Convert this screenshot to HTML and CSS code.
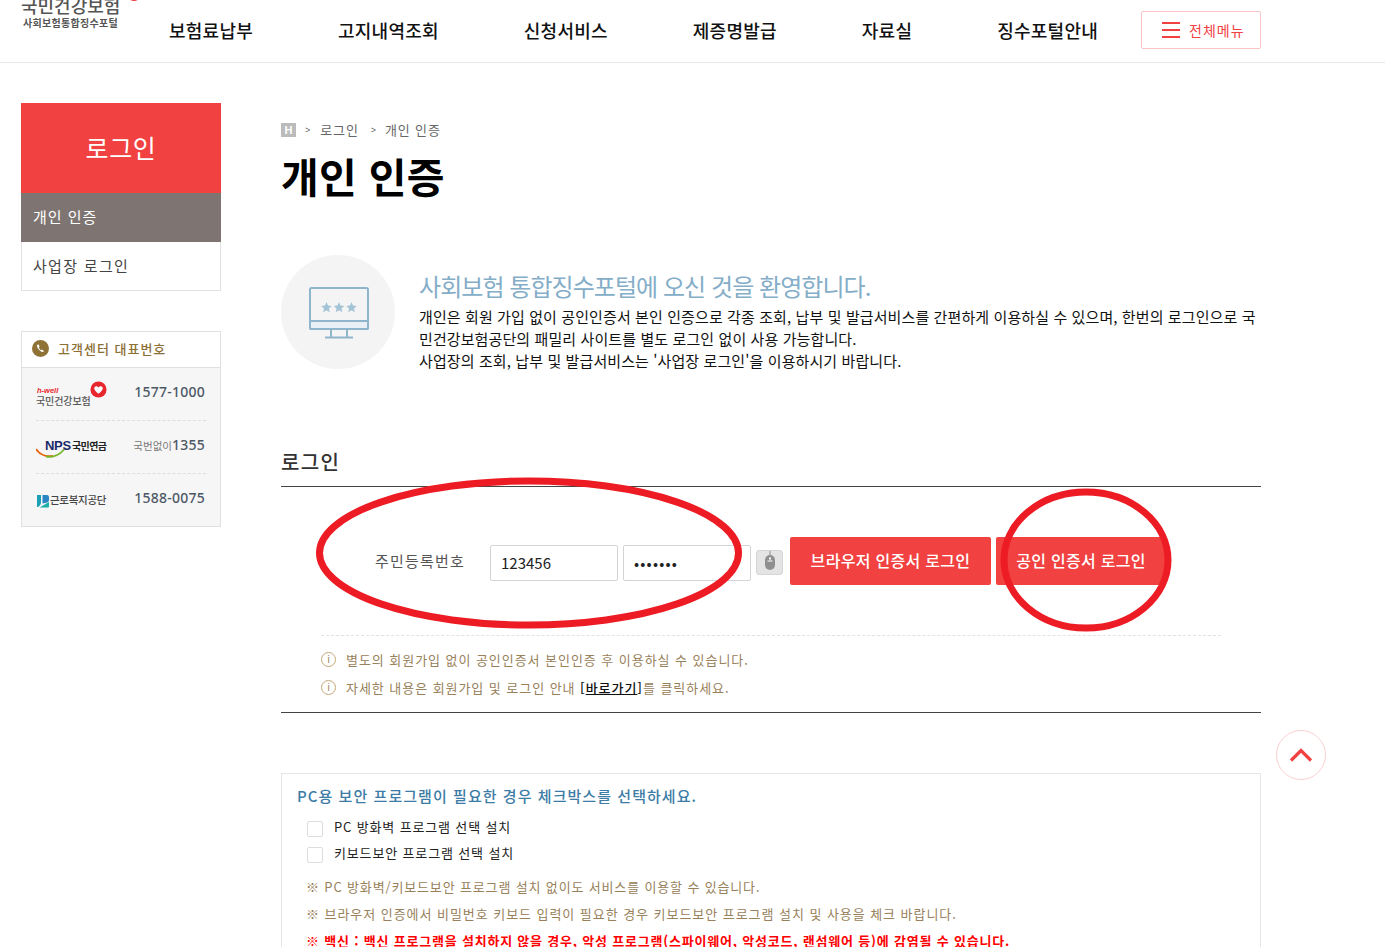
FILE: index.html
```html
<!DOCTYPE html>
<html lang="ko">
<head>
<meta charset="utf-8">
<title>개인 인증</title>
<link rel="stylesheet" href="styles.css">
</head>
<body>
<header class="header">
  <a class="logo">
    <span class="logo-main">국민건강보험</span>
    <span class="logo-sub">사회보험통합징수포털</span>
    <span class="logo-dot"></span>
  </a>
  <nav class="nav">
    <a>보험료납부</a><a>고지내역조회</a><a>신청서비스</a><a>제증명발급</a><a>자료실</a><a>징수포털안내</a>
  </nav>
  <button class="all-menu"><span class="burger"><i></i><i></i><i></i></span>전체메뉴</button>
</header>
<div class="page">
  <aside class="side">
    <h2 class="side-title">로그인</h2>
    <ul class="side-menu">
      <li class="on">개인 인증</li>
      <li>사업장 로그인</li>
    </ul>
    <section class="call">
      <h3 class="call-head">
        <svg class="call-icon" width="17" height="17" viewBox="0 0 17 17"><circle cx="8.5" cy="8.5" r="8.5" fill="#8f7336"/><path d="M5.6 4.6c-.9.7-.7 2.4.6 4.2 1.400 1.900 3 3.200 4.300 3.200.8 0 1.300-.5 1.300-1l-2-1.500-.9.700C8 9.700 7.200 8.600 6.800 7.500l.8-.8-1-2.200z" fill="#fff"/></svg>
        고객센터 대표번호
      </h3>
      <div class="call-row">
        <span class="org org-nhis">
          <em>h-well</em><b>국민건강보험</b>
          <svg class="heart" width="17" height="17" viewBox="0 0 18 18"><circle cx="9" cy="9" r="8.500" fill="#e8262d"/><path d="M9 13.500C6 11.200 4.500 9.700 4.500 7.800 4.500 6.400 5.500 5.500 6.700 5.500c1 0 1.800.6 2.300 1.400.5-.8 1.300-1.400 2.300-1.400 1.200 0 2.200.9 2.200 2.300 0 1.900-1.500 3.400-4.500 5.700z" fill="#fff"/></svg>
        </span>
        <span class="tel">1577-1000</span>
      </div>
      <div class="call-row">
        <span class="org org-nps">
          <svg class="swoosh" width="29" height="10" viewBox="0 0 29 10"><path d="M0 1c4 6 11 8 17 7" fill="none" stroke="#e8650f" stroke-width="2"/><path d="M10 8.500c7 1 14-2 18-7" fill="none" stroke="#7ab52c" stroke-width="2"/></svg>
          <b class="nps">NPS</b><b class="nps-name">국민연금</b>
        </span>
        <span class="tel"><small>국번없이</small>1355</span>
      </div>
      <div class="call-row">
        <span class="org org-kcomwel">
          <svg width="13" height="14" viewBox="0 0 13 14"><path d="M1 1h4v7c0 2-1 4-3 5H1z" fill="#1b9fb5"/><path d="M6.500 1H11c1.500 0 2 1 2 2.500V6c0 2-2 3-4 3l-2.500.5z" fill="#2a86c4"/><path d="M3.500 13.500L13 8v4c0 1-.5 1.500-1.500 1.500z" fill="#1bb0a8"/></svg>
          <b>근로복지공단</b>
        </span>
        <span class="tel">1588-0075</span>
      </div>
    </section>
  </aside>
  <main class="main">
    <div class="crumb">
      <span class="crumb-home">H</span>
      <span class="crumb-sep">&gt;</span><span>로그인</span>
      <span class="crumb-sep crumb-sep2">&gt;</span><span>개인 인증</span>
    </div>
    <h1 class="title">개인 인증</h1>
    <section class="intro">
      <div class="intro-icon">
        <svg width="60" height="52" viewBox="0 0 60 52">
          <rect x="1" y="1" width="58" height="41" rx="1.500" fill="none" stroke="#8fb5cd" stroke-width="2"/>
          <path d="M1 34h58v7a1 1 0 0 1-1 1H2a1 1 0 0 1-1-1z" fill="#e8eff5" stroke="#8fb5cd" stroke-width="2"/>
          <path d="M22 42v8M38 42v8M16 50.500h28" fill="none" stroke="#8fb5cd" stroke-width="2"/>
          <path d="M17.500 15l1.500 3.600 3.800.3-2.900 2.500.9 3.800-3.300-2-3.300 2 .9-3.800-2.900-2.500 3.800-.3z" fill="#a3c3d7"/>
          <path d="M30 15l1.500 3.600 3.800.3-2.900 2.500.9 3.800-3.300-2-3.300 2 .9-3.800-2.900-2.500 3.800-.3z" fill="#a3c3d7"/>
          <path d="M42.500 15l1.500 3.600 3.800.3-2.900 2.500.9 3.800-3.300-2-3.300 2 .9-3.800-2.900-2.500 3.800-.3z" fill="#a3c3d7"/>
        </svg>
      </div>
      <div class="intro-text">
        <h2>사회보험 통합징수포털에 오신 것을 환영합니다.</h2>
        <p>개인은 회원 가입 없이 공인인증서 본인 인증으로 각종 조회, 납부 및 발급서비스를 간편하게 이용하실 수 있으며, 한번의 로그인으로 국민건강보험공단의 패밀리 사이트를 별도 로그인 없이 사용 가능합니다.<br>사업장의 조회, 납부 및 발급서비스는 '사업장 로그인'을 이용하시기 바랍니다.</p>
      </div>
    </section>
    <h2 class="sec-title">로그인</h2>
    <section class="login">
      <div class="login-row">
        <label class="login-label">주민등록번호</label>
        <input class="field" type="text" value="123456">
        <input class="field field-pw" type="password" value="1234567">
        <span class="mouse-btn">
          <svg width="12" height="20" viewBox="0 0 12 20"><path d="M6 0v4" stroke="#8f8f8f"/><rect x="1" y="4" width="10" height="15" rx="5" fill="#8f8f8f"/><path d="M3.500 10h5" stroke="#fff"/><rect x="5" y="6.500" width="2" height="2" fill="#fff"/></svg>
        </span>
        <button class="login-btn">브라우저 인증서 로그인</button>
        <button class="login-btn login-btn2">공인 인증서 로그인</button>
      </div>
      <ul class="login-notes">
        <li><span class="info">i</span>별도의 회원가입 없이 공인인증서 본인인증 후 이용하실 수 있습니다.</li>
        <li><span class="info">i</span>자세한 내용은 회원가입 및 로그인 안내 <a class="go">[<u>바로가기</u>]</a>를 클릭하세요.</li>
      </ul>
      <svg class="mark mark-ellipse" width="434" height="160" viewBox="0 0 434 160"><ellipse cx="217" cy="80" rx="209.500" ry="72" fill="none" stroke="#ed1c24" stroke-width="7"/></svg>
      <svg class="mark mark-circle" width="178" height="150" viewBox="0 0 178 150"><ellipse cx="89" cy="75" rx="82" ry="68" fill="none" stroke="#ed1c24" stroke-width="7"/></svg>
    </section>
    <section class="secure">
      <h3>PC용 보안 프로그램이 필요한 경우 체크박스를 선택하세요.</h3>
      <label class="check"><input type="checkbox"><span>PC 방화벽 프로그램 선택 설치</span></label>
      <label class="check"><input type="checkbox"><span>키보드보안 프로그램 선택 설치</span></label>
      <p class="note note-first">※ PC 방화벽/키보드보안 프로그램 설치 없이도 서비스를 이용할 수 있습니다.</p>
      <p class="note note-wide">※ 브라우저 인증에서 비밀번호 키보드 입력이 필요한 경우 키보드보안 프로그램 설치 및 사용을 체크 바랍니다.</p>
      <p class="note note-red">※ 백신 : 백신 프로그램을 설치하지 않을 경우, 악성 프로그램(스파이웨어, 악성코드, 랜섬웨어 등)에 감염될 수 있습니다.</p>
    </section>
  </main>
</div>
<a class="to-top"><svg width="24" height="14" viewBox="0 0 24 14"><path d="M2 12.500L12 2.500l10 10" fill="none" stroke="#f24141" stroke-width="3.200"/></svg></a>
</body>
</html>
```
FILE: styles.css
```css
* { box-sizing: border-box; }
html, body { margin: 0; padding: 0; height: 947px; overflow: hidden; background: #fff; }
body { font-family: "Noto Sans CJK KR", "Noto Sans", sans-serif; color: #222; font-size: 14px; position: relative; }
h1, h2, h3, p, ul { margin: 0; padding: 0; font-weight: normal; }
ul { list-style: none; }

.header { height: 63px; border-bottom: 1px solid #e7e7e7; display: flex; align-items: flex-start; position: relative; overflow: hidden; padding-left: 21px; }
.logo { display: flex; flex-direction: column; width: 148px; margin-top: -6px; position: relative; }
.logo-main { font-size: 18px; line-height: 22px; font-weight: 500; color: #555; }
.logo-sub { font-size: 10px; line-height: 13px; font-weight: 700; color: #555; margin-left: 2px; letter-spacing: .3px; white-space: nowrap; }
.logo-dot { position: absolute; left: 105px; top: -11px; width: 16px; height: 18px; border-radius: 50%; background: #ee3b3f; }
.nav { display: flex; gap: 85px; padding-top: 17px; }
.nav a { font-size: 18px; line-height: 26px; color: #111; font-weight: 500; letter-spacing: 0.24px; white-space: nowrap; }
.all-menu { margin: 11px 0 0 43px; width: 120px; height: 38px; border: 1px solid #fbc4c4; border-radius: 2px; background: #fff; color: #f24141; font: 14px "Noto Sans CJK KR", sans-serif; letter-spacing: 1px; display: flex; align-items: center; padding: 0 0 0 20px; gap: 9px; }
.burger { display: flex; flex-direction: column; gap: 5px; width: 18px; }
.burger i { display: block; height: 2px; background: #f24141; }

.page { display: flex; gap: 60px; padding: 40px 0 0 21px; }
.side { width: 200px; flex: none; }
.side-title { height: 90px; background: #f24141; color: #fff; font-size: 25px; line-height: 88px; text-align: center; letter-spacing: .6px; }
.side-menu { border: 1px solid #e2e2e2; border-top: 0; }
.side-menu li { height: 48px; line-height: 48px; padding-left: 11px; font-size: 15px; color: #444; letter-spacing: 1.3px; }
.side-menu li.on { background: #7e7572; color: #fff; margin: 0 -1px; height: 49px; padding-left: 12px; letter-spacing: 1px; }
.call { margin-top: 40px; border: 1px solid #e0e0e0; background: #f6f6f6; height: 196px; }
.call-head { height: 36px; background: #fff; border-bottom: 1px solid #e0e0e0; display: flex; align-items: center; gap: 9px; padding: 0 0 2px 10px; font-size: 13px; color: #8c6f35; font-weight: 500; letter-spacing: 1px; }
.call-row { height: 53px; margin: 0 14px; display: flex; align-items: center; justify-content: space-between; border-bottom: 1px dashed #ddd; }
.call-row:last-child { border-bottom: 0; }
.org { display: flex; align-items: center; position: relative; width: 72px; height: 30px; color: #444; }
.org-nhis b { font-size: 10px; font-weight: 500; color: #555; position: absolute; left: 0; top: 16px; line-height: 12px; white-space: nowrap; letter-spacing: -.1px; }
.org-nhis em { font: italic 700 7.500px/8px "Liberation Sans", sans-serif; color: #e8262d; position: absolute; left: 1px; top: 8px; }
.heart { position: absolute; left: 54px; top: 2px; }
.swoosh { position: absolute; left: 0; top: 16px; }
.nps { font: 700 13px "Liberation Sans", sans-serif; color: #1c2a6b; position: absolute; left: 9px; top: 6px; letter-spacing: -.3px; }
.nps-name { font-size: 10px; font-weight: 700; color: #222; position: absolute; left: 36px; top: 7px; line-height: 13px; white-space: nowrap; letter-spacing: -.6px; }
.org-kcomwel { gap: 1px; }
.org-kcomwel b { font-size: 10.500px; font-weight: 500; color: #444; white-space: nowrap; letter-spacing: -.3px; margin-bottom: 2px; }
.tel { font: 500 14px "Noto Sans", sans-serif; color: #4d5866; white-space: nowrap; margin: 0 1px 6px 0; letter-spacing: .25px; }
.tel small { font: 10.500px "Noto Sans CJK KR", sans-serif; color: #777; letter-spacing: 0; }

.main { width: 980px; flex: none; }
.crumb { margin-top: 16px; height: 20px; display: flex; align-items: center; font-size: 13px; color: #666; letter-spacing: .85px; }
.crumb-home { width: 15px; height: 14px; background: #bbb; color: #fff; font: 700 11px/14px "Liberation Sans", sans-serif; letter-spacing: 0; text-align: center; margin-top: 2px; }
.crumb-sep { font: 9px "Liberation Sans", sans-serif; margin: 2px 10px 0 9px; letter-spacing: 0; }
.crumb-sep2 { margin-left: 12px; margin-right: 9px; }
.title { margin-top: 10px; font-size: 41px; line-height: 52px; font-weight: 700; color: #000; letter-spacing: .3px; }
.intro { margin-top: 54px; display: flex; gap: 24px; height: 114px; }
.intro-icon { width: 114px; height: 114px; border-radius: 50%; background: #f4f4f4; flex: none; display: flex; align-items: center; justify-content: center; padding: 2px 0 0 2px; }
.intro-text h2 { font-size: 24px; line-height: 32px; color: #84adc8; margin-top: 15px; white-space: nowrap; letter-spacing: -.95px; }
.intro-text p { font-size: 15px; line-height: 22px; color: #111; margin-top: 4px; width: 842px; letter-spacing: .1px; }
.sec-title { margin-top: 81px; font-size: 20px; line-height: 24px; font-weight: 500; color: #333; height: 37px; border-bottom: 1px solid #444; letter-spacing: 1.3px; }
.login { position: relative; height: 226px; border-bottom: 1px solid #444; }
.login-row { display: flex; align-items: center; padding-top: 50px; height: 98px; }
.login-label { width: 209px; padding-left: 94px; font-size: 15px; color: #555; margin-top: -1px; white-space: nowrap; letter-spacing: 1.2px; }
.field { width: 128px; height: 36px; border: 1px solid #d4d4d4; border-radius: 2px; margin: 4px 5px 0 0; padding: 0 10px 2px; font: 15px "Noto Sans CJK KR", sans-serif; color: #222; background: #fff; outline: 0; }
.field-pw { letter-spacing: 1.2px; }
.mouse-btn { width: 27px; height: 25px; border: 1px solid #d5d5d5; border-radius: 3px; background: #e4e4e4; display: flex; justify-content: center; margin: 3px 7px 0 0; }
.login-btn { width: 201px; height: 48px; background: #f24141; color: #fff; border: 0; border-radius: 2px; font: 500 16px "Noto Sans CJK KR", sans-serif; letter-spacing: .3px; padding: 0 0 2px; }
.login-btn2 { width: 170px; margin-left: 5px; }
.login-notes { margin: 50px 40px 0; border-top: 1px dashed #e2e2e2; padding-top: 9px; }
.login-notes li { height: 28px; display: flex; align-items: center; font-size: 13px; color: #98815b; white-space: pre; letter-spacing: .95px; }
.info { width: 15px; height: 15px; border: 1px solid #c5a878; border-radius: 50%; font: 10px/13px "Liberation Sans", sans-serif; text-align: center; margin-right: 10px; flex: none; letter-spacing: 0; }
.go { color: #111; font-weight: 500; }
.mark { position: absolute; pointer-events: none; }
.mark-ellipse { left: 31px; top: -14px; }
.mark-circle { left: 716px; top: -2px; }

.secure { margin-top: 60px; border: 1px solid #e6e6e6; padding: 11px 15px 0; height: 300px; }
.secure h3 { font-size: 15px; line-height: 22px; font-weight: 500; color: #3d7ca6; letter-spacing: 1.05px; }
.check { display: flex; align-items: center; height: 26px; padding-left: 10px; font-size: 13px; color: #222; letter-spacing: .85px; }
.check span { margin-top: -2px; }
.secure h3 + .check { margin-top: 7px; }
.check input { appearance: none; width: 16px; height: 16px; margin: 4px 11px 0 0; border: 1px solid #ddd; border-radius: 2px; background: #fff; }
.note { font-size: 13px; line-height: 27px; height: 27px; padding-left: 9px; color: #98815b; white-space: nowrap; letter-spacing: .85px; }
.note-first { margin-top: 7px; }
.note-wide { letter-spacing: .95px; }
.note-red { color: #f00; font-weight: 700; letter-spacing: .8px; }

.to-top { position: absolute; left: 1276px; top: 730px; width: 50px; height: 50px; border: 1px solid #fbd0d0; border-radius: 50%; background: #fff; display: flex; align-items: center; justify-content: center; }
```
